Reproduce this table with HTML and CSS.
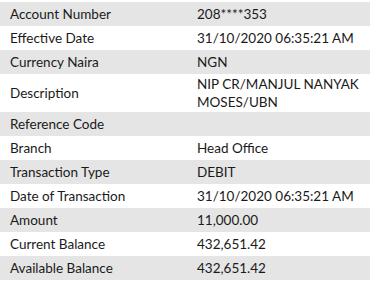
FILE: index.html
```html
<!DOCTYPE html>
<html>
<head>
<meta charset="utf-8">
<link rel="stylesheet" href="styles.css">
</head>
<body>
<table class="details">
  <tr class="odd"><td class="label">Account Number</td><td class="value">208****353</td></tr>
  <tr><td class="label">Effective Date</td><td class="value">31/10/2020 06:35:21 AM</td></tr>
  <tr class="odd"><td class="label">Currency Naira</td><td class="value">NGN</td></tr>
  <tr class="tall"><td class="label">Description</td><td class="value">NIP CR/MANJUL NANYAK<br>MOSES/UBN</td></tr>
  <tr class="odd"><td class="label">Reference Code</td><td class="value"></td></tr>
  <tr><td class="label">Branch</td><td class="value">Head Office</td></tr>
  <tr class="odd"><td class="label">Transaction Type</td><td class="value">DEBIT</td></tr>
  <tr><td class="label">Date of Transaction</td><td class="value">31/10/2020 06:35:21 AM</td></tr>
  <tr class="odd"><td class="label">Amount</td><td class="value">11,000.00</td></tr>
  <tr><td class="label">Current Balance</td><td class="value">432,651.42</td></tr>
  <tr class="odd"><td class="label">Available Balance</td><td class="value">432,651.42</td></tr>
</table>
</body>
</html>
```
FILE: styles.css
```css
html, body {
  margin: 0;
  background: #ffffff;
}
body {
  padding-top: 2px;
  font-family: Lato, "Open Sans", sans-serif;
  font-size: 13.5px;
  color: #1a1a1a;
}
.details {
  width: 370px;
  border-collapse: collapse;
  border-spacing: 0;
}
.details td {
  height: 24px;
  padding: 0;
  line-height: 18px;
  vertical-align: middle;
}
.details tr.tall td {
  height: 38px;
}
.details tr.odd td {
  background: #e5e5e5;
}
.label {
  width: 177px;
  padding-left: 10px !important;
}
.value {
  padding-left: 10px !important;
}
```
